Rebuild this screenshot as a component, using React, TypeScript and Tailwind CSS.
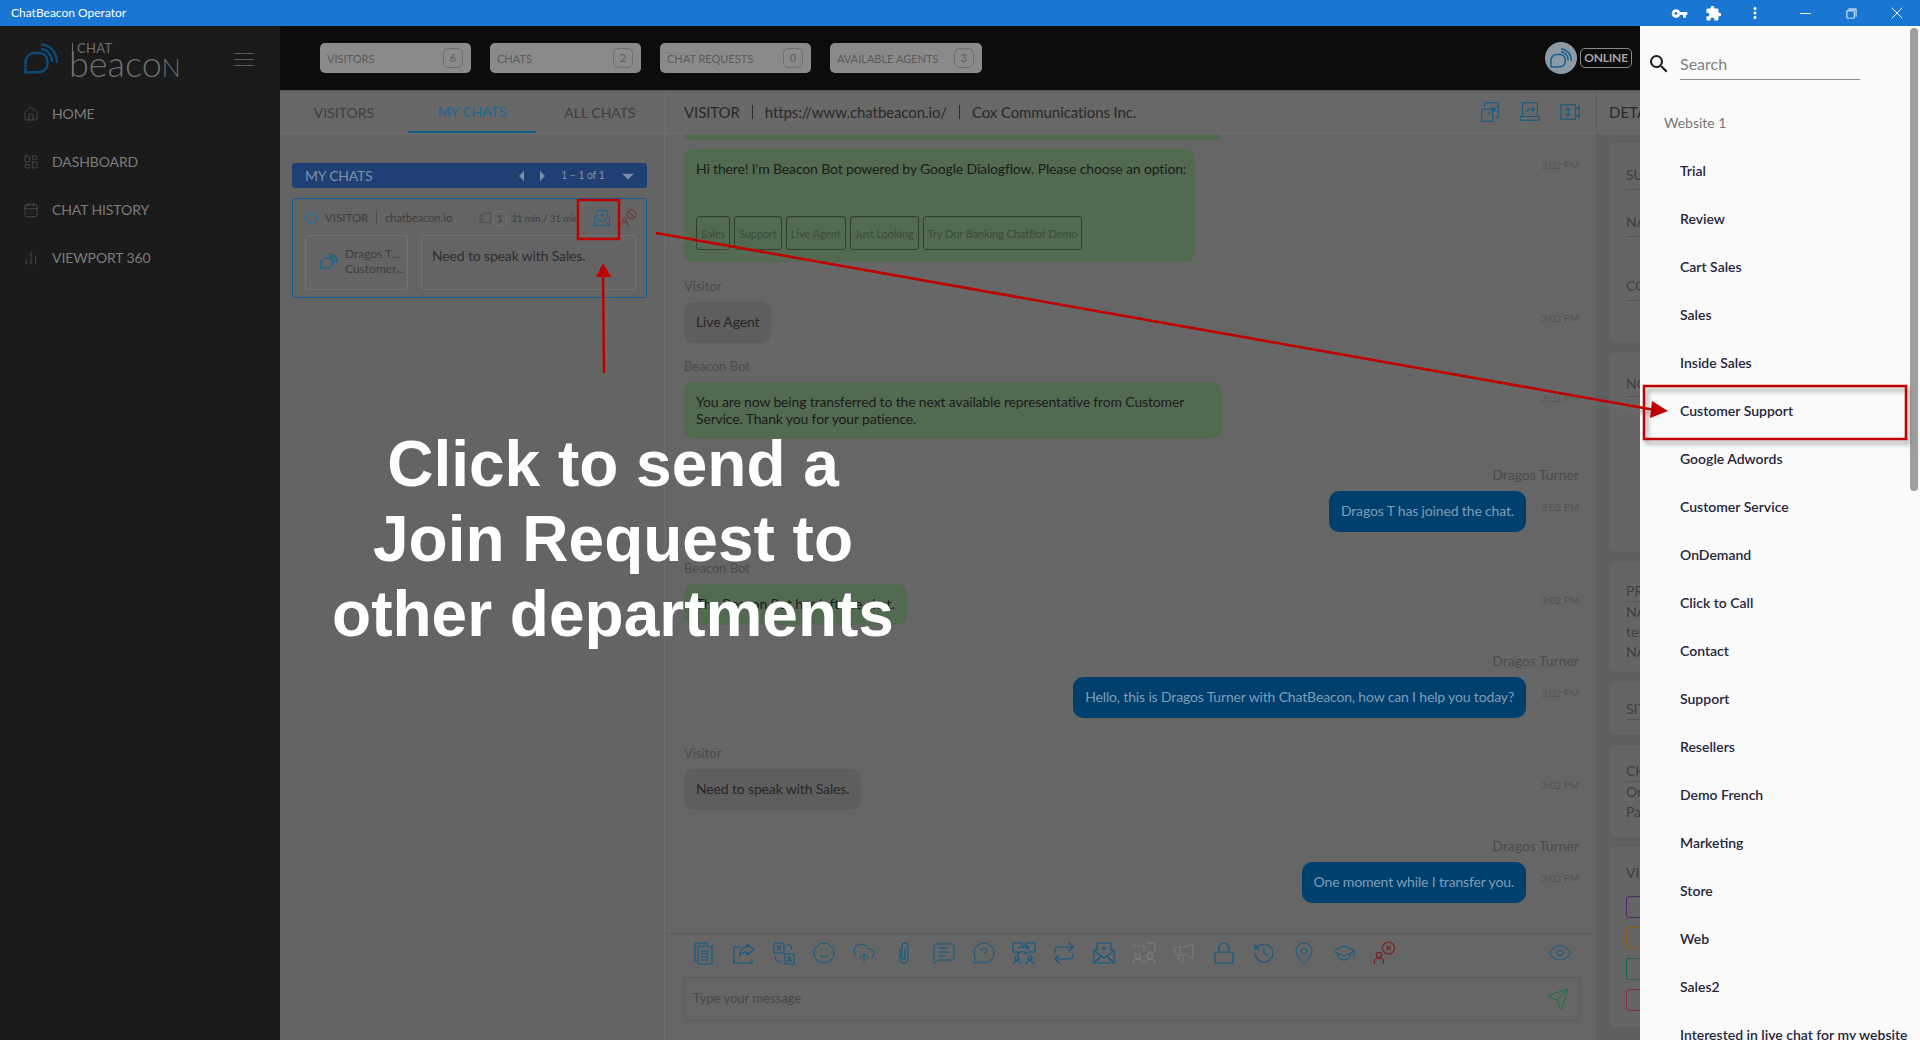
import { ReactNode } from "react";
import {
  CalendarDays,
  ChartNoAxesColumn,
  CloudUpload,
  Eye,
  GraduationCap,
  History,
  House,
  LayoutDashboard,
  Lock,
  MapPin,
  Megaphone,
  MessageCircleQuestion,
  MessageSquareText,
  Minus,
  Repeat,
  Send,
  Smile,
  X,
} from "lucide-react";
import {
  MdArrowDropDown,
  MdArrowLeft,
  MdArrowRight,
  MdExtension,
  MdFilterNone,
  MdMoreVert,
  MdSearch,
  MdVpnKey,
} from "react-icons/md";

const departments = [
  "Trial",
  "Review",
  "Cart Sales",
  "Sales",
  "Inside Sales",
  "Customer Support",
  "Google Adwords",
  "Customer Service",
  "OnDemand",
  "Click to Call",
  "Contact",
  "Support",
  "Resellers",
  "Demo French",
  "Marketing",
  "Store",
  "Web",
  "Sales2",
  "Interested in live chat for my website",
];

const chips = [
  { label: "VISITORS", count: 6, w: "w-[151px]" },
  { label: "CHATS", count: 2, w: "w-[151px]" },
  { label: "CHAT REQUESTS", count: 0, w: "w-[151px]" },
  { label: "AVAILABLE AGENTS", count: 3, w: "w-[152px]" },
];

function BeaconMark({ className }: { className: string }) {
  return (
    <svg viewBox="0 0 34 31" fill="none" stroke="currentColor" strokeWidth="2.4" className={className}>
      <path d="M1.5 29.5V19a9 9 0 0 1 9-9h5a8 8 0 0 1 8 8v3a8 8 0 0 1-8 8z" />
      <path d="M17 1.5C26 2 33 9 33 20" />
      <path d="M17 6c6 0 11 6 11 13" />
    </svg>
  );
}

function Line({ children, className }: { children: ReactNode; className: string }) {
  return (
    <svg viewBox="0 0 24 24" fill="none" stroke="currentColor" strokeWidth="1.1" className={className}>
      {children}
    </svg>
  );
}

function MailPlus({ className }: { className: string }) {
  return (
    <Line className={className}>
      <path d="M5 10V2h14v8" />
      <path d="M2 10l10 7 10-7v12H2z" />
      <path d="M2 10l3-2M22 10l-3-2M2 22l7.500-7M22 22l-7.500-7M12 5v5M9.500 7.500h5" />
    </Line>
  );
}

function UserBlock({ className, x }: { className: string; x?: boolean }) {
  return (
    <Line className={className}>
      <circle cx="7" cy="14" r="2.6" />
      <path d="M2.5 23v-2.5a3 3 0 0 1 3-3h3a3 3 0 0 1 3 3V23" />
      <circle cx="16.5" cy="7" r="6" />
      {x ? <path d="M14.5 5l4 4M18.5 5l-4 4" /> : <path d="M12.5 3l8 8" />}
    </Line>
  );
}

const toolIcons: ReactNode[] = [
  <Line className="h-6 w-6 text-[#0e5a85]" key="files">
    <path d="M5 20H3V3a1 1 0 0 1 1-1h11v2" />
    <path d="M6 5h14v18H6zM9 10h8M9 13h8M9 16h8M9 19h8" />
  </Line>,
  <Line className="h-6 w-6 text-[#0e5a85]" key="share">
    <path d="M9 6H2v16h18v-4" />
    <path d="M15 3l7 5.5-7 5.5v-3c-4 0-6 1-7.500 4 0-6 3-9 7.500-9z" />
  </Line>,
  <Line className="h-6 w-6 text-[#0e5a85]" key="translate">
    <path d="M2 2h10v10H2zM13 13h9v10h-9zM4.500 5h5M5 9.500l4-4.500M9 9.500l-4-4.500M15.500 21l2-5 2 5M16 19.500h3" />
    <path d="M15 4c3 0 5 2 5 5M3 15c0 3 2 6 6 6" />
  </Line>,
  <Smile key="smile" strokeWidth={1} className="h-6 w-6 text-[#0e5a85]" />,
  <CloudUpload key="cloud" strokeWidth={1} className="h-6 w-6 text-[#0e5a85]" />,
  <Line className="h-6 w-6 text-[#0e5a85]" key="clip">
    <path d="M8 7v11a4 4 0 0 0 8 0V5a3 3 0 0 0-6 0v12a1.500 1.500 0 0 0 3 0V7" />
  </Line>,
  <MessageSquareText key="msg" strokeWidth={1} className="h-6 w-6 text-[#0e5a85]" />,
  <MessageCircleQuestion key="help" strokeWidth={1} className="h-6 w-6 text-[#0e5a85]" />,
  <Line className="h-6 w-6 text-[#0e5a85]" key="transfer">
    <path d="M1 2h9v3h4V2h9v9h-7l-3 2v-2H8l-2 2v-2H1zM6 6.500h11M14 4.500l3 2-3 2" />
    <circle cx="5" cy="17" r="2" />
    <circle cx="18" cy="17" r="2" />
    <path d="M1.500 23v-1a3 3 0 0 1 3-2h1a3 3 0 0 1 3 2v1M14.500 23v-1a3 3 0 0 1 3-2h1a3 3 0 0 1 3 2v1" />
  </Line>,
  <Repeat key="repeat" strokeWidth={1.1} className="h-6 w-6 text-[#0e5a85]" />,
  <MailPlus key="mail" className="h-6 w-6 text-[#0e5a85]" />,
  <Line className="h-6 w-6 text-[#7c7c7c]" key="group">
    <path d="M1 5h11v6M14 2h9v9h-7" />
    <circle cx="6" cy="15" r="2.500" />
    <circle cx="18" cy="15" r="2.500" />
    <path d="M1.500 23v-2a3 3 0 0 1 3-2.500h3a3 3 0 0 1 3 2.500v2M13.500 23v-2a3 3 0 0 1 3-2.500h3a3 3 0 0 1 3 2.500v2" />
  </Line>,
  <Megaphone key="mega" strokeWidth={1} className="h-6 w-6 text-[#7c7c7c]" />,
  <Lock key="lock" strokeWidth={1.1} className="h-6 w-6 text-[#0e5a85]" />,
  <History key="history" strokeWidth={1.1} className="h-6 w-6 text-[#0e5a85]" />,
  <MapPin key="pin" strokeWidth={1} className="h-6 w-6 text-[#0e5a85]" />,
  <GraduationCap key="cap" strokeWidth={1} className="h-6 w-6 text-[#0e5a85]" />,
  <UserBlock key="end" x className="h-6 w-6 text-[#7d1f1f]" />,
];

function Chip({ label, count, w }: { label: string; count: number; w: string }) {
  return (
    <div className={`flex h-[30px] items-center justify-between rounded-[5px] bg-[#8a8a8a] pl-[7px] pr-2 ${w}`}>
      <span className="pt-[2px] text-[11px] text-[#5a5a5a]">{label}</span>
      <span className="flex h-5 w-5 items-center justify-center rounded-[5px] border border-[#6f6f6f] text-[11px] text-[#5a5a5a]">
        {count}
      </span>
    </div>
  );
}

function Message({
  label,
  text,
  right,
  blue,
  gray,
  top,
  children,
  box,
}: {
  label?: string;
  text: ReactNode;
  right?: boolean;
  blue?: boolean;
  gray?: boolean;
  top: string;
  children?: ReactNode;
  box?: string;
}) {
  const color = blue ? "bg-[#00406f] text-[#7f9db5]" : gray ? "bg-[#5e5e5e] text-[#262626]" : "bg-[#526a50] text-[#1c1c1c]";
  return (
    <div className={top}>
      {label && (
        <div className={`mb-2 h-4 leading-4 text-[#4b4b4b] ${right ? "text-right text-sm" : "text-[13px]"}`}>{label}</div>
      )}
      <div className="flex">
        <div className={`flex flex-1 ${right ? "justify-end" : "justify-start"}`}>
          <div className={`rounded-[10px] px-3 pb-[13px] pt-[11px] text-sm leading-[17px] tracking-[-0.15px] ${color} ${box ?? ""}`}>
            {text}
            {children}
          </div>
        </div>
        <span className="mt-[10px] w-[53px] text-right text-[10px] font-light leading-3 text-[#444444]">3:02 PM</span>
      </div>
    </div>
  );
}

const botButtons = ["Sales", "Support", "Live Agent", "Just Looking", "Try Our Banking ChatBot Demo"];

export default function App() {
  return (
    <div className="relative h-[1040px] w-[1920px] overflow-hidden bg-[#666666] font-['Lato','Noto_Sans',sans-serif]">
      {/* Title bar */}
      <header className="flex h-[26px] items-center justify-between bg-[#1976d2] pl-[11px] text-white">
        <span className="text-xs">ChatBeacon Operator</span>
        <div className="flex items-center">
          <MdVpnKey className="mr-[17px] h-[17px] w-[17px]" />
          <MdExtension className="mr-[24px] h-[17px] w-[17px]" />
          <MdMoreVert className="mr-[33px] h-[18px] w-[18px]" />
          <Minus strokeWidth={1.3} className="mr-[32px] h-[17px] w-[17px]" />
          <MdFilterNone className="mr-[30px] h-[11px] w-[11px] -scale-x-100 -scale-y-100" />
          <X strokeWidth={1.1} className="mr-[13px] h-5 w-5" />
        </div>
      </header>

      <div className="flex h-[1014px]">
        {/* Sidebar */}
        <aside className="w-[280px] shrink-0 bg-[#1b1b1b]">
          <div className="relative h-16">
            <BeaconMark className="absolute left-[24px] top-[17px] h-[31px] w-[34px] text-[#0d4a78]" />
            <div className="absolute left-[72px] top-[17px] h-[30px] w-px bg-[#6b6b6b]" />
            <span className="absolute left-[77px] top-[14px] text-[13px] leading-4 tracking-wide text-[#6e6e6e]">CHAT</span>
            <span className="absolute left-[69px] top-[17px] text-[36px] font-light leading-[40px] text-[#6e6e6e]">
              beaco<span className="text-[25px]">N</span>
            </span>
            <div className="absolute left-[234px] top-[27px] flex w-5 flex-col gap-[5px]">
              <div className="h-px bg-[#5a5a5a]" />
              <div className="h-px bg-[#5a5a5a]" />
              <div className="h-px bg-[#5a5a5a]" />
            </div>
          </div>
          <nav className="flex flex-col">
            {[
              { label: "HOME", icon: <House strokeWidth={1} className="h-4 w-4" /> },
              { label: "DASHBOARD", icon: <LayoutDashboard strokeWidth={1} className="h-4 w-4" /> },
              { label: "CHAT HISTORY", icon: <CalendarDays strokeWidth={1} className="h-4 w-4" /> },
              { label: "VIEWPORT 360", icon: <ChartNoAxesColumn strokeWidth={1} className="h-4 w-4" /> },
            ].map((item) => (
              <div key={item.label} className="flex h-12 items-center gap-[13px] pl-[23px] text-sm tracking-[-0.1px] text-[#7c7c7c]">
                <span className="text-[#5c5c5c]">{item.icon}</span>
                {item.label}
              </div>
            ))}
          </nav>
        </aside>

        <main className="flex min-w-0 flex-1 flex-col">
          {/* Top bar */}
          <div className="flex h-16 shrink-0 items-center gap-[19px] bg-[#0c0c0c] pl-10">
            {chips.map((c) => (
              <Chip key={c.label} {...c} />
            ))}
            <div className="ml-[544px] flex items-center gap-[3px]">
              <div className="flex h-8 w-8 items-center justify-center rounded-full bg-[#8d9aa5]">
                <BeaconMark className="h-[22px] w-[22px] text-[#17608f]" />
              </div>
              <span className="flex h-5 w-[52px] items-center justify-center rounded-[5px] border border-[#8a8a8a] text-xs font-bold tracking-[-0.2px] text-[#a5a5a5]">
                ONLINE
              </span>
            </div>
          </div>

          <div className="flex min-h-0 flex-1 border-t border-[#555555]">
            {/* Chat list column */}
            <section className="w-[385px] shrink-0 border-r border-[#6e6e6e] bg-[#646464]">
              <div className="flex h-[43px] border-b border-[#6e6e6e] bg-[#676767] text-sm">
                <div className="flex flex-1 items-center justify-center pt-[2px] text-[#3e3e3e]">VISITORS</div>
                <div className="flex flex-1 items-center justify-center border-b-2 border-[#0d5a85] pt-[2px] text-[#1b6a98]">MY CHATS</div>
                <div className="flex flex-1 items-center justify-center pt-[2px] text-[#3e3e3e]">ALL CHATS</div>
              </div>
              <div className="pl-3 pr-[17px] pt-[29px]">
                <div className="flex h-[25px] items-center rounded-[3px] bg-[#1f3f75] pl-[13px] pr-[5px] text-[#7f8fa8]">
                  <span className="w-[62px] whitespace-nowrap text-sm tracking-[-0.2px]">MY CHATS</span>
                  <MdArrowLeft className="ml-[143px] h-6 w-6" />
                  <MdArrowRight className="-ml-[4px] h-6 w-6" />
                  <span className="ml-[7px] whitespace-nowrap text-[11px] tracking-[-0.3px]">1 – 1 of 1</span>
                  <MdArrowDropDown className="ml-auto h-7 w-7" />
                </div>
                <div className="mt-[10px] h-[100px] rounded-[3px] border border-[#0d5f92] px-3 pt-[9px]">
                  <div className="flex h-[20px] items-center pl-px text-[11.5px] text-[#3e3e3e]">
                    <span className="h-[11px] w-[11px] shrink-0 rounded-full border-[1.5px] border-[#0f74b5]" />
                    <span className="ml-[8px] w-[42px] shrink-0">VISITOR</span>
                    <span className="ml-[9px] mr-[8px] h-[14px] w-px shrink-0 bg-[#4f4f4f]" />
                    <span className="w-[65px] shrink-0 whitespace-nowrap text-[11px]">chatbeacon.io</span>
                    <Line className="ml-[29px] h-[13px] w-[13px] shrink-0 text-[#3e3e3e]">
                      <path d="M5 19H2V7a2 2 0 0 1 2-2M6 2h16v17H6z" />
                    </Line>
                    <span className="ml-[1px] flex h-[15px] w-[14px] shrink-0 items-center justify-center rounded-[3px] border border-[#707070] text-[10px]">1</span>
                    <span className="ml-[4px] w-[65px] shrink-0 whitespace-nowrap text-[10px] tracking-[-0.15px]">31 min / 31 min</span>
                    <MailPlus className="ml-[17px] h-[18px] w-[18px] shrink-0 text-[#0f6296]" />
                    <UserBlock className="ml-[8px] h-[18px] w-[18px] shrink-0 text-[#7d1f1f]" />
                  </div>
                  <div className="mt-[7px] flex gap-[13px]">
                    <div className="flex h-[55px] w-[103px] shrink-0 items-center rounded-[3px] border border-[#727272] pb-[3px] pl-[14px] text-xs leading-[15px] text-[#3e3e3e]">
                      <BeaconMark className="mr-[7px] h-[18px] w-[18px] shrink-0 text-[#0f6296]" />
                      <div className="whitespace-nowrap">
                        <div>Dragos T...</div>
                        <div>Customer...</div>
                      </div>
                    </div>
                    <div className="h-[55px] w-[215px] shrink-0 rounded-[3px] border border-[#727272] pl-[10px] pt-[12px] text-sm leading-4 tracking-[-0.15px] text-[#2e2e2e]">
                      Need to speak with Sales.
                    </div>
                  </div>
                </div>
              </div>
            </section>

            {/* Conversation column */}
            <section className="flex w-[932px] shrink-0 flex-col border-r border-[#5c5c5c]">
              <div className="flex h-[43px] shrink-0 items-center border-b border-[#6f6f6f] bg-[#686868] pl-[19px] pr-[15px] text-[15px] tracking-[-0.1px] text-[#2a2a2a]">
                <span>VISITOR</span>
                <span className="mx-3 h-[14px] w-px bg-[#2a2a2a]" />
                <span>https://www.chatbeacon.io/</span>
                <span className="mx-3 h-[14px] w-px bg-[#2a2a2a]" />
                <span>Cox Communications Inc.</span>
                <div className="ml-auto flex gap-[18px] text-[#0e5a85]">
                  <Line className="h-[22px] w-[22px]">
                    <path d="M6 6V2h15v4M3 9h15M3 9v13h12V9M18 6h3v12h-3M10 15l7-7M13 8h4v4" />
                  </Line>
                  <Line className="h-[22px] w-[22px]">
                    <path d="M4 2h16v15H4zM2 21h20v-4H2zM8 12l3-3h6M14 6l3 3-3 3" />
                  </Line>
                  <Line className="h-[22px] w-[22px]">
                    <path d="M2 4h16v16H2zM18 9l4-3v12l-4-3M10 7v10M7 9h6M7 15h6" />
                  </Line>
                </div>
              </div>

              <div className="min-h-0 flex-1 overflow-hidden pl-[19px] pr-[17px]">
                <div className="h-[6px] w-[537px] rounded-b-[10px] bg-[#526a50]" />
                <Message
                  top="mt-[9px]"
                  box="h-[113px] w-[511px] !pb-[11px] whitespace-nowrap"
                  text="Hi there! I'm Beacon Bot powered by Google Dialogflow. Please choose an option:"
                >
                  <div className="mt-[39px] flex gap-[4px]">
                    {botButtons.map((b) => (
                      <span
                        key={b}
                        className="flex h-[34px] items-center whitespace-nowrap rounded-[3px] border border-[#2f412e] px-1 text-[11px] tracking-[-0.1px] text-[#3b4d39]"
                      >
                        {b}
                      </span>
                    ))}
                  </div>
                </Message>
                <Message top="mt-4" label="Visitor" gray text="Live Agent" />
                <Message
                  top="mt-[15px]"
                  label="Beacon Bot"
                  box="w-[538px] h-[57px] !pb-[11px]"
                  text="You are now being transferred to the next available representative from Customer Service. Thank you for your patience."
                />
                <Message top="mt-[28px]" label="Dragos Turner" right blue text="Dragos T has joined the chat." />
                <Message top="mt-[28px]" label="Beacon Bot" text="The Beacon Bot has left the chat." />
                <Message
                  top="mt-[28px]"
                  label="Dragos Turner"
                  right
                  blue
                  text="Hello, this is Dragos Turner with ChatBeacon, how can I help you today?"
                />
                <Message top="mt-[27px]" label="Visitor" gray text="Need to speak with Sales." />
                <Message top="mt-[28px]" label="Dragos Turner" right blue text="One moment while I transfer you." />
              </div>

              <div className="h-[107px] shrink-0 border-t border-[#5c5c5c] pl-[19px] pr-[16px] pt-[7px]">
                <div className="flex h-[24px] items-center pr-[8px]">
                  <div className="flex gap-[16px] pl-[8px]">{toolIcons}</div>
                  <Eye strokeWidth={1} className="ml-auto h-6 w-6 text-[#0e5a85]" />
                </div>
                <div className="mt-[12px] flex h-[44px] items-center justify-between rounded-[3px] border border-[#5c5c5c] pl-[8px] pr-[8px]">
                  <span className="text-[13px] text-[#474747]">Type your message</span>
                  <Send strokeWidth={1} className="mr-[1px] h-6 w-6 text-[#13743f]" />
                </div>
              </div>
            </section>

            {/* Details column, mostly under the drawer */}
            <section className="min-w-0 flex-1 overflow-hidden bg-[#5f5f5f]">
              <div className="flex h-[43px] items-center border-b border-[#6f6f6f] bg-[#686868] pl-3 text-[15px] text-[#2a2a2a]">DETAILS</div>
              <div className="flex flex-col gap-[10px] pl-3 pt-[9px] text-sm text-[#3e3e3e]">
                <div className="h-[199px] rounded-[6px] bg-[#656565] pl-[17px] pt-[22px]">
                  <div className="border-b border-[#555555] pb-[4px]">SUBJECT</div>
                  <div className="mt-[22px] border-b border-[#555555] pb-[4px]">NAME</div>
                  <div className="mt-[39px] border-b border-[#555555] pb-[4px]">COMPANY</div>
                </div>
                <div className="h-[200px] rounded-[6px] bg-[#656565] pl-[17px] pt-[22px]">
                  <div className="border-b border-[#555555] pb-[2px]">NOTES</div>
                </div>
                <div className="h-[110px] rounded-[6px] bg-[#656565] pl-[17px] pt-[19px] leading-[20px]">
                  <div className="border-b border-[#555555]">PROFILE</div>
                  <div>NAME</div>
                  <div>test</div>
                  <div>NAME</div>
                </div>
                <div className="h-[53px] rounded-[6px] bg-[#656565] pl-[17px] pt-[17px]">
                  <div className="border-b border-[#555555]">SITE</div>
                </div>
                <div className="h-[92px] rounded-[6px] bg-[#656565] pl-[17px] pt-[16px] leading-[20px]">
                  <div className="border-b border-[#555555]">CHAT</div>
                  <div>Origin</div>
                  <div>Page</div>
                </div>
                <div className="h-[180px] rounded-[6px] bg-[#656565] pl-[17px] pt-[16px]">
                  <div>VIEWS</div>
                  <div className="mt-[13px] flex flex-col gap-[9px]">
                    <div className="h-[22px] w-16 rounded-[3px] border border-[#4f2a6f]" />
                    <div className="h-[22px] w-16 rounded-[3px] border border-[#8a5a10]" />
                    <div className="h-[22px] w-16 rounded-[3px] border border-[#0f6a5c]" />
                    <div className="h-[22px] w-16 rounded-[3px] border border-[#8a2a4a]" />
                  </div>
                </div>
              </div>
            </section>
          </div>
        </main>
      </div>

      {/* Department drawer */}
      <aside className="absolute bottom-0 right-0 top-[26px] w-[280px] overflow-hidden bg-[#fafafa]">
        <div className="flex h-[73px] items-start pl-[7px] pt-[23px]">
          <MdSearch className="mt-[3px] h-6 w-6 text-[#1c1c1c]" />
          <div className="ml-[9px] h-[31px] w-[180px] border-b border-[#8c8c8c] pt-[3px] text-base leading-6 text-[#808080]">Search</div>
        </div>
        <div className="flex h-12 items-center pl-6 text-sm text-[#767676]">Website 1</div>
        {departments.map((d) => (
          <div key={d} className="flex h-12 items-center whitespace-nowrap pl-10 text-sm font-semibold text-[#26263a]">
            {d}
          </div>
        ))}
        <div className="absolute right-[2px] top-[2px] h-[463px] w-2 rounded-full bg-[#9e9e9e]" />
      </aside>

      {/* Tutorial annotations */}
      <svg viewBox="0 0 1920 1040" className="absolute inset-0 h-[1040px] w-[1920px]" fill="none">
        <g stroke="#6e6e6e" strokeOpacity="0.55" fill="none" strokeWidth="3" transform="translate(3 4)" className="blur-[2px]">
          <path d="M656 233L1655 410M604 373L603 275" />
          <rect x="578" y="200" width="41" height="39" />
          <rect x="1644" y="386" width="262" height="53" />
        </g>
        <g stroke="#c00000" strokeWidth="2.5">
          <path d="M656 233L1655 410M604 373L603 275" />
          <rect x="578" y="200" width="41" height="39" />
          <rect x="1644" y="386" width="262" height="53" />
        </g>
        <path d="M1668 411L1652 401L1650 418Z M603 263L596 277L611 277Z" fill="#c00000" />
      </svg>
      <div className="absolute left-[313px] top-[427px] w-[600px] text-center font-['Liberation_Sans',Arial,sans-serif] text-[64px] font-bold leading-[75px] text-white">
        Click to send a
        <br />
        Join Request to
        <br />
        other departments
      </div>
    </div>
  );
}
